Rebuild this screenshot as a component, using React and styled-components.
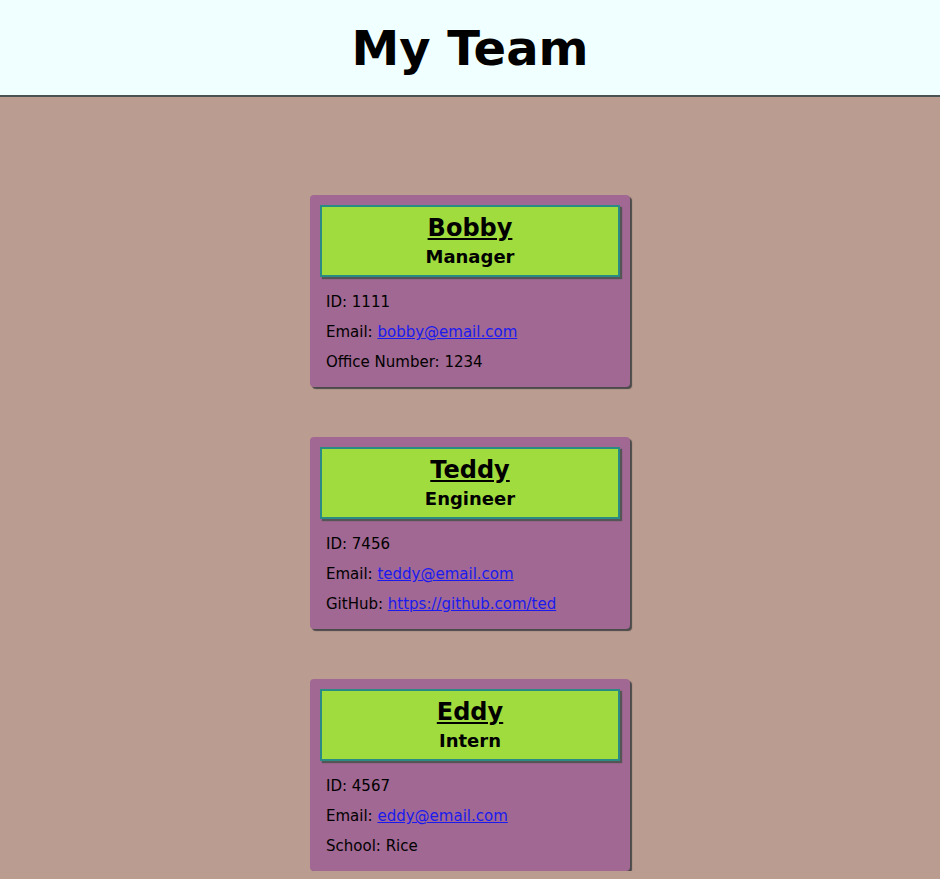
import React from "react";
import styled, { createGlobalStyle } from "styled-components";

const Global = createGlobalStyle`
  html, body { margin: 0; padding: 0; }
  body {
    background: #bb9c90;
    font-family: "DejaVu Sans", Verdana, sans-serif;
  }
`;

const Header = styled.header`
  background: #f0ffff;
  height: 95px;
  border-bottom: 2px solid #4a5252;
  display: flex;
  align-items: center;
  justify-content: center;
`;

const Title = styled.h1`
  margin: 0;
  font-size: 48px;
  font-weight: bold;
  color: #000;
`;

const Main = styled.main`
  display: flex;
  flex-direction: column;
  align-items: center;
  gap: 50px;
  padding-top: 98px;
`;

const Card = styled.section`
  width: 320px;
  box-sizing: border-box;
  background: #a06892;
  border-radius: 4px;
  box-shadow: 2px 2px 1px #4a4a4a;
  padding: 10px 10px 10px;
`;

const CardHead = styled.div`
  background: #a0dc3e;
  border: 2px solid #2a8a84;
  box-shadow: 2px 2px 1px #555;
  height: 72px;
  box-sizing: border-box;
  display: flex;
  flex-direction: column;
  align-items: center;
  justify-content: center;
`;

const Name = styled.h2`
  margin: 0;
  font-size: 24px;
  font-weight: bold;
  text-decoration: underline;
  line-height: 32px;
`;

const Role = styled.h3`
  margin: 0;
  font-size: 18px;
  font-weight: bold;
  line-height: 26px;
`;

const Info = styled.ul`
  list-style: none;
  margin: 0;
  padding: 10px 0 0 6px;
`;

const Item = styled.li`
  font-size: 15px;
  line-height: 30px;
  color: #000;
`;

const Link = styled.a`
  color: #1a1aee;
`;

const team = [
  { name: "Bobby", role: "Manager", id: "1111", email: "bobby@email.com", extraLabel: "Office Number", extra: "1234" },
  { name: "Teddy", role: "Engineer", id: "7456", email: "teddy@email.com", extraLabel: "GitHub", extra: "https://github.com/ted", link: true },
  { name: "Eddy", role: "Intern", id: "4567", email: "eddy@email.com", extraLabel: "School", extra: "Rice" },
];

export default function App() {
  return (
    <>
      <Global />
      <Header>
        <Title>My Team</Title>
      </Header>
      <Main>
        {team.map((m) => (
          <Card key={m.name}>
            <CardHead>
              <Name>{m.name}</Name>
              <Role>{m.role}</Role>
            </CardHead>
            <Info>
              <Item>ID: {m.id}</Item>
              <Item>
                Email: <Link href={`mailto:${m.email}`}>{m.email}</Link>
              </Item>
              <Item>
                {m.extraLabel}:{" "}
                {m.link ? <Link href={m.extra}>{m.extra}</Link> : m.extra}
              </Item>
            </Info>
          </Card>
        ))}
      </Main>
    </>
  );
}
